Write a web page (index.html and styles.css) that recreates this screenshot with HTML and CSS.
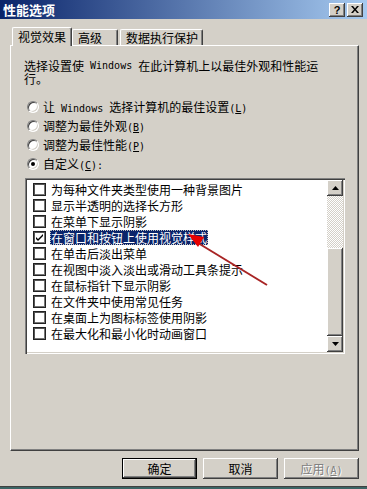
FILE: index.html
```html
<!DOCTYPE html>
<html>
<head>
<meta charset="utf-8">
<link rel="stylesheet" href="styles.css">
</head>
<body>
<div class="window">
  <div class="titlebar">
    <span class="title">性能选项</span>
    <div class="tbtns">
      <span class="tbtn">?</span>
      <span class="tbtn"><svg width="8" height="7" viewBox="0 0 8 7"><path d="M0 0h2l2 2.5L6 0h2L5 3.5 8 7H6L4 4.5 2 7H0l3-3.5z" fill="#000"/></svg></span>
    </div>
  </div>
  <div class="main">
    <div class="tabs">
      <div class="tab active t1">视觉效果</div>
      <div class="tab t2">高级</div>
      <div class="tab t3">数据执行保护</div>
    </div>
    <div class="panel">
      <div class="intro">
        <div class="iline">选择设置使<span class="m"> Windows </span>在此计算机上以最佳外观和性能运</div>
        <div class="iline">行。</div>
      </div>
      <div class="radios">
        <div class="ropt"><span class="radio"></span><span>让<span class="m"> Windows </span>选择计算机的最佳设置<span class="m">(<u>L</u>)</span></span></div>
        <div class="ropt"><span class="radio"></span><span>调整为最佳外观<span class="m">(<u>B</u>)</span></span></div>
        <div class="ropt"><span class="radio"></span><span>调整为最佳性能<span class="m">(<u>P</u>)</span></span></div>
        <div class="ropt"><span class="radio on"></span><span>自定义<span class="m">(<u>C</u>):</span></span></div>
      </div>
      <div class="list">
        <div class="items">
          <div class="row"><span class="cb"></span><span class="lbl">为每种文件夹类型使用一种背景图片</span></div>
          <div class="row"><span class="cb"></span><span class="lbl">显示半透明的选择长方形</span></div>
          <div class="row"><span class="cb"></span><span class="lbl">在菜单下显示阴影</span></div>
          <div class="row"><span class="cb"><svg width="9" height="9" viewBox="0 0 9 9"><path d="M1 4l2 2 5-5v2L3 8 1 6z" fill="#000"/></svg></span><span class="lbl sel">在窗口和按钮上使用视觉样式</span></div>
          <div class="row"><span class="cb"></span><span class="lbl">在单击后淡出菜单</span></div>
          <div class="row"><span class="cb"></span><span class="lbl">在视图中淡入淡出或滑动工具条提示</span></div>
          <div class="row"><span class="cb"></span><span class="lbl">在鼠标指针下显示阴影</span></div>
          <div class="row"><span class="cb"></span><span class="lbl">在文件夹中使用常见任务</span></div>
          <div class="row"><span class="cb"></span><span class="lbl">在桌面上为图标标签使用阴影</span></div>
          <div class="row"><span class="cb"></span><span class="lbl">在最大化和最小化时动画窗口</span></div>
        </div>
        <div class="scrollbar">
          <div class="sbtn"><svg width="7" height="4" viewBox="0 0 7 4"><path d="M3.5 0L7 4H0z" fill="#000"/></svg></div>
          <div class="track"></div>
          <div class="thumb"></div>
          <div class="sbtn"><svg width="7" height="4" viewBox="0 0 7 4"><path d="M0 0h7L3.5 4z" fill="#000"/></svg></div>
        </div>
      </div>
    </div>
    <div class="buttons">
      <div class="btn default"><span>确定</span></div>
      <div class="btn"><span>取消</span></div>
      <div class="btn disabled"><span>应用<span class="m">(<u>A</u>)</span></span></div>
    </div>
  </div>
  <svg class="arrow" width="367" height="489" viewBox="0 0 367 489">
    <line x1="198" y1="243" x2="267" y2="285" stroke="#a82424" stroke-width="2"/>
    <polygon points="188,234 204,237 198,247" fill="#e80000"/>
  </svg>
</div>
</body>
</html>
```

FILE: styles.css
```css
* { box-sizing: border-box; margin: 0; padding: 0; }
html, body { width: 367px; height: 489px; overflow: hidden; }
body {
  background: #3c6464;
  font-family: "Noto Sans CJK SC", "Liberation Sans", sans-serif;
  font-size: 12px;
  color: #000;
}
.m { font-family: "DejaVu Sans Mono", "Liberation Mono", monospace; font-size: 10px; white-space: pre; }

.window {
  position: relative;
  width: 367px;
  height: 487px;
  background: #d4d0c8;
  border-bottom: 1px solid #404040;
}

.titlebar {
  height: 19px;
  background: linear-gradient(to right, #0a246a, #a6caf0);
  display: flex;
  align-items: center;
  justify-content: space-between;
  padding: 0 4px 0 3px;
}
.title { color: #fff; font-weight: bold; font-size: 13px; line-height: 19px; }
.tbtns { display: flex; gap: 2px; }
.tbtn {
  width: 16px; height: 14px;
  background: #d4d0c8;
  box-shadow: inset -1px -1px #404040, inset 1px 1px #fff, inset -2px -2px #808080;
  display: flex; align-items: center; justify-content: center;
  font: bold 11px "Liberation Sans", sans-serif;
  line-height: 14px;
}

.main { padding: 8px 8px 0 10px; }

.tabs {
  display: flex;
  align-items: flex-end;
  height: 18px;
  padding-left: 2px;
  position: relative;
  z-index: 1;
}
.tab {
  height: 16px;
  border-top: 1px solid #fff;
  border-left: 1px solid #fff;
  border-right: 1px solid #404040;
  box-shadow: inset -1px 0 #808080;
  border-radius: 2px 2px 0 0;
  background: #d4d0c8;
  padding-left: 5px;
  line-height: 15px;
  white-space: nowrap;
}
.tab.active { height: 19px; margin-bottom: -1px; padding-top: 1px; line-height: 15px; }
.t1 { width: 60px; }
.t2 { width: 46px; }
.t3 { width: 83px; margin-left: 2px; }

.panel {
  height: 406px;
  border-top: 1px solid #fff;
  border-left: 1px solid #fff;
  border-right: 1px solid #404040;
  border-bottom: 1px solid #404040;
  box-shadow: inset -1px -1px #808080;
  padding: 13px 0 0 13px;
}
.iline { height: 13px; line-height: 13px; white-space: nowrap; display: flex; align-items: center; }

.radios { margin-top: 12px; }
.ropt { height: 19px; display: flex; align-items: center; padding-left: 3px; white-space: nowrap; }
.radio {
  width: 12px; height: 12px;
  border-radius: 50%;
  background: #fff;
  border: 1px solid;
  border-color: #808080 #fff #fff #808080;
  box-shadow: inset 1px 1px #404040, inset -1px -1px #d4d0c8;
  margin-right: 4px;
  position: relative;
  flex: none;
}
.radio.on::after {
  content: "";
  position: absolute;
  left: 3px; top: 3px;
  width: 4px; height: 4px;
  border-radius: 50%;
  background: #000;
}

.list {
  margin: 5px 0 0 1px;
  width: 320px;
  height: 176px;
  display: flex;
  background: #fff;
  padding: 2px;
  box-shadow: inset 1px 1px #808080, inset 2px 2px #404040, inset -1px -1px #fff, inset -2px -2px #d4d0c8;
}
.items { flex: 1; padding: 1px 0 0 6px; }
.row { height: 16px; display: flex; align-items: center; white-space: nowrap; }
.cb {
  width: 13px; height: 13px;
  background: #fff;
  border: 1px solid #222;
  box-shadow: inset 1px 1px #555, inset -1px -1px #777;
  margin-right: 4px;
  flex: none;
  display: flex; align-items: center; justify-content: center;
}
.lbl { padding: 0 1px; line-height: 15px; }
.lbl.sel { background: #0a246a; color: #fff; outline: 1px dotted #c0c0c0; outline-offset: -1px; }

.scrollbar { width: 16px; display: flex; flex-direction: column; }
.sbtn, .thumb {
  background: #d4d0c8;
  box-shadow: inset -1px -1px #404040, inset 1px 1px #fff, inset -2px -2px #808080;
}
.sbtn { height: 16px; display: flex; align-items: center; justify-content: center; }
.track {
  height: 52px;
  background: repeating-conic-gradient(#fff 0 25%, #d4d0c8 0 50%) 0 0 / 2px 2px;
}
.thumb { height: 88px; }

.buttons { display: flex; justify-content: flex-end; gap: 6px; margin-top: 7px; }
.btn {
  width: 75px; height: 21px;
  background: #d4d0c8;
  box-shadow: inset -1px -1px #404040, inset 1px 1px #fff, inset -2px -2px #808080;
  display: flex; align-items: center; justify-content: center;
  white-space: nowrap;
}
.btn.default {
  border: 1px solid #000;
  box-shadow: inset -1px -1px #404040, inset 1px 1px #fff, inset -2px -2px #808080;
}
.btn.disabled { color: #808080; text-shadow: 1px 1px #fff; }

.arrow { position: absolute; left: 0; top: 0; pointer-events: none; }
```
